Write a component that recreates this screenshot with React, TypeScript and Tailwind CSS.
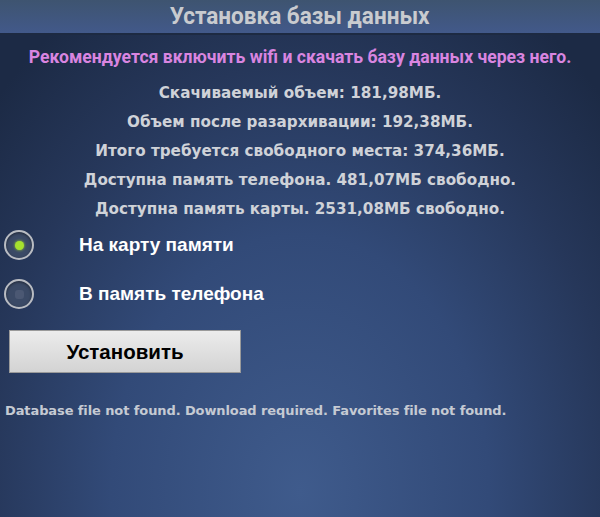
import React, { useState } from "react";

const infoLines = [
  "Скачиваемый объем: 181,98МБ.",
  "Объем после разархивации: 192,38МБ.",
  "Итого требуется свободного места: 374,36МБ.",
  "Доступна память телефона. 481,07МБ свободно.",
  "Доступна память карты. 2531,08МБ свободно.",
];

function Radio({ checked }: { checked: boolean }) {
  return (
    <div className="w-[30px] h-[30px] rounded-full border-2 border-[#b9bcc2] bg-[#3b4a66] flex items-center justify-center shadow-[inset_0_1px_3px_rgba(0,0,0,0.5)]">
      {checked ? (
        <div className="w-[9px] h-[9px] rounded-full bg-[#a6e22e] shadow-[0_0_3px_#a6e22e]" />
      ) : (
        <div className="w-[9px] h-[9px] rounded-[3px] bg-[#4b5873]" />
      )}
    </div>
  );
}

export default function App() {
  const [target, setTarget] = useState<"card" | "phone">("card");

  return (
    <div className="w-[600px] h-[517px] overflow-hidden flex flex-col bg-[radial-gradient(ellipse_70%_110%_at_50%_95%,#3f5b8c_0%,#324a78_45%,#26375a_75%,#1c2a45_100%)] font-['DejaVu_Sans',sans-serif]">
      {/* title bar */}
      <div className="h-[35px] shrink-0 flex items-center justify-center bg-[linear-gradient(#3e5470,#42598a)] border-b-2 border-[#1d2a42]">
        <h1 className="font-['Roboto',sans-serif] font-bold text-[23px] leading-[28px] text-[#c9cbcf] scale-x-[0.98]">
          Установка базы данных
        </h1>
      </div>

      <p className="mt-[9px] text-center font-['Roboto',sans-serif] font-bold text-[17.6px] text-[#d985e0]">
        Рекомендуется включить wifi и скачать базу данных через него.
      </p>

      <div className="mt-[13px] flex flex-col items-center gap-[8px]">
        {infoLines.map((line) => (
          <p key={line} className="text-[15.2px] leading-[21px] font-bold text-[#cfd2d8]">
            {line}
          </p>
        ))}
      </div>

      <div className="mt-[10px] flex flex-col gap-[19px] pl-[4px]">
        <button onClick={() => setTarget("card")} className="flex items-center gap-[45px]">
          <Radio checked={target === "card"} />
          <span className="font-['Liberation_Sans',sans-serif] font-bold text-[19px] text-white">
            На карту памяти
          </span>
        </button>
        <button onClick={() => setTarget("phone")} className="flex items-center gap-[45px]">
          <Radio checked={target === "phone"} />
          <span className="font-['Liberation_Sans',sans-serif] font-bold text-[19px] text-white">
            В память телефона
          </span>
        </button>
      </div>

      <button className="mt-[21px] ml-[9px] w-[232px] h-[43px] shrink-0 bg-[linear-gradient(#ececec,#d3d3d3)] border border-[#9a9a9a] font-['Liberation_Sans',sans-serif] font-bold text-[20.5px] text-black">
        Установить
      </button>

      <p className="mt-[28px] pl-[5px] text-[13px] font-bold text-[#c5cad3] tracking-[-0.1px]">
        Database file not found. Download required. Favorites file not found.
      </p>
    </div>
  );
}
